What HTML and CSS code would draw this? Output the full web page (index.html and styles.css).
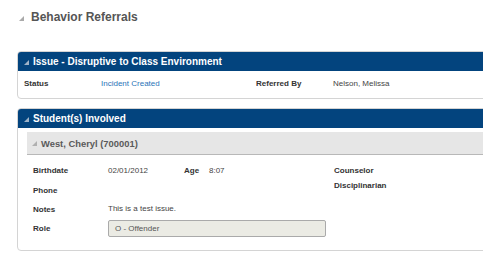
FILE: index.html
```html
<!DOCTYPE html>
<html lang="en">
<head>
    <meta charset="UTF-8">
    <meta name="viewport" content="width=device-width, initial-scale=1.0">
    <title>Behavior Referrals</title>
    <link rel="stylesheet" href="styles.css">
</head>
<body>

<div class="page">
    <h1 class="title">
        <svg class="tri" width="5" height="5" viewBox="0 0 5 5"><polygon points="5,0 5,5 0,5"/></svg>
        Behavior Referrals
    </h1>

    <!-- Issue -->
    <div class="panel">
        <div class="panel-head">
            <svg class="tri" width="5" height="5" viewBox="0 0 5 5"><polygon points="5,0 5,5 0,5"/></svg>
            Issue - Disruptive to Class Environment
        </div>
        <div class="issue-row">
            <span class="label">Status</span>
            <span class="link">Incident Created</span>
            <span class="label">Referred By</span>
            <span class="value">Nelson, Melissa</span>
        </div>
    </div>

    <!-- Students -->
    <div class="panel">
        <div class="panel-head">
            <svg class="tri" width="5" height="5" viewBox="0 0 5 5"><polygon points="5,0 5,5 0,5"/></svg>
            Student(s) Involved
        </div>
        <div class="panel-body">
            <div class="student-head">
                <svg class="tri" width="5" height="5" viewBox="0 0 5 5"><polygon points="5,0 5,5 0,5"/></svg>
                West, Cheryl (700001)
            </div>
            <div class="details">
                <span class="label">Birthdate</span>
                <span class="value">02/01/2012</span>
                <span class="label age">Age</span>
                <span class="value">8:07</span>
                <span class="label">Counselor</span>

                <span class="label">Phone</span>
                <span class="value wide"></span>
                <span class="label up">Disciplinarian</span>

                <span class="label">Notes</span>
                <span class="value wide note">This is a test issue.</span>
                <span></span>

                <span class="label">Role</span>
                <div class="select">O - Offender</div>
                <span></span>
            </div>
        </div>
    </div>
</div>

</body>
</html>
```

FILE: styles.css
```css
body {
    margin: 0;
    font-family: "Liberation Sans", Arial, sans-serif;
    background-color: white;
    overflow: hidden;
}

.page {
    width: 600px;
    padding-left: 17px;
}

.tri {
    display: inline-block;
    vertical-align: middle;
}

.title {
    display: flex;
    align-items: center;
    gap: 7px;
    height: 14px;
    margin: 10px 0 27px 2px;
    font-size: 12px;
    line-height: 14px;
    font-weight: bold;
    color: #555555;
}

.title .tri { fill: #aaaaaa; margin-top: 2px; }

/* Paneli */
.panel {
    border: 1px solid #d4d4d4;
    border-radius: 4px;
    margin-bottom: 9px;
    overflow: hidden;
}

.panel-head {
    display: flex;
    align-items: center;
    gap: 4px;
    height: 19px;
    padding-left: 6px;
    background-color: #03447e;
    color: white;
    font-size: 10px;
    font-weight: bold;
}

.panel-head .tri { fill: #9fb3c8; margin-top: 1px; }

.label {
    font-size: 8px;
    font-weight: bold;
    color: #333333;
}

.value {
    font-size: 8px;
    color: #444444;
}

.link {
    font-size: 8px;
    color: #2a74b8;
}

.issue-row {
    display: grid;
    grid-template-columns: 77px 155px 77px auto;
    align-items: center;
    height: 12px;
    padding: 7px 0 8px 6px;
    line-height: 12px;
}

.panel-body {
    padding: 4px 0 12px 9px;
}

.student-head {
    display: flex;
    align-items: center;
    gap: 4px;
    height: 22px;
    padding-left: 5px;
    background-color: #e6e6e6;
    border-bottom: 1px solid #b8b8b8;
    font-size: 9.4px;
    font-weight: bold;
    color: #5a5a5a;
}

.student-head .tri { fill: #b0b0b0; }

.details {
    display: grid;
    grid-template-columns: 75px 76px 25px 125px auto;
    grid-template-rows: 20px 20px 19px 19px;
    align-items: center;
    padding: 5px 0 0 6px;
}

.details .wide { grid-column: span 3; }
.details .up { align-self: start; margin-top: 1px; }
.details .note { margin-top: -3px; }

.select {
    grid-column: span 3;
    width: 210px;
    height: 15px;
    line-height: 15px;
    padding-left: 6px;
    border: 1px solid #aaaaaa;
    border-radius: 2px;
    background-color: #ebebe4;
    font-size: 8px;
    color: #555555;
}
```
